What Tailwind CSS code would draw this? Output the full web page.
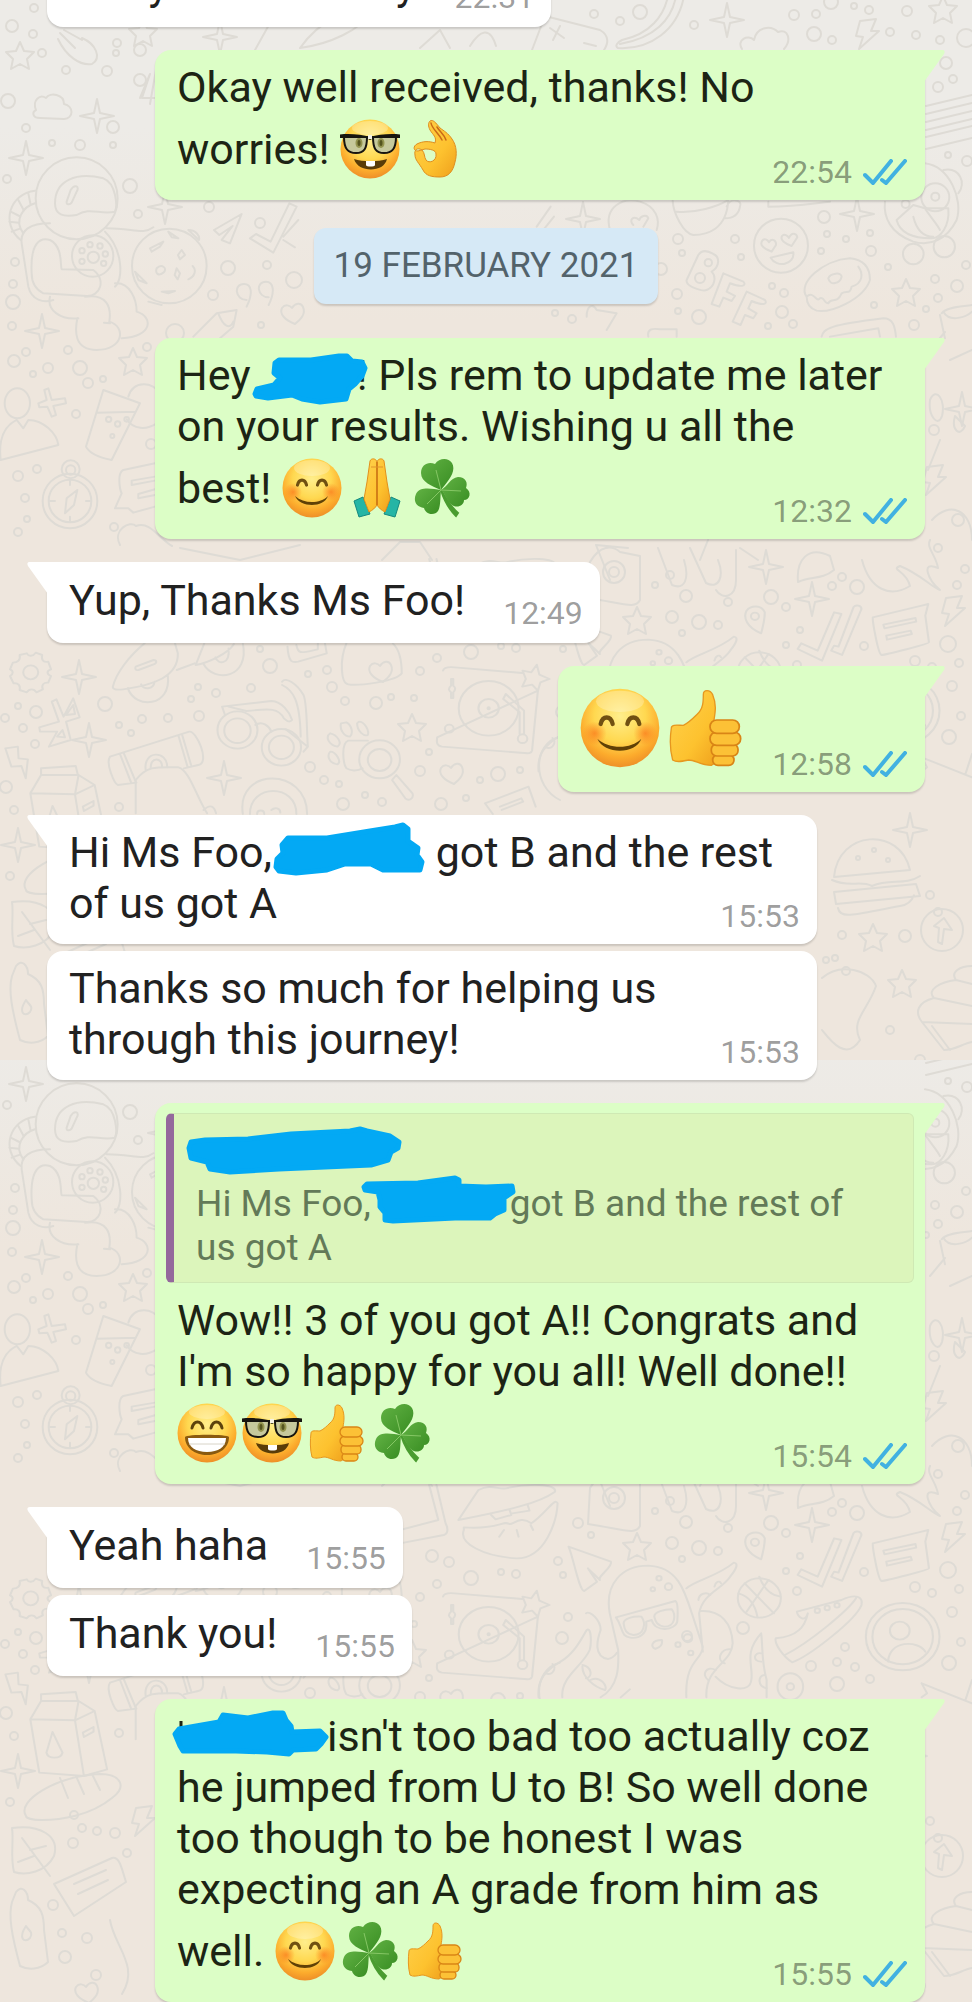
<!DOCTYPE html>
<html lang="en">
<head>
    <meta charset="UTF-8">
    <meta name="viewport" content="width=device-width, initial-scale=1.0">
    <title>Chat</title>
    <script src="https://cdn.jsdelivr.net/npm/@tailwindcss/browser@4"></script>
</head>
<body class="bg-[#eee6dd] font-[Roboto,'Liberation_Sans',sans-serif] text-[#1c2414]">

    <!-- Shared drawings -->
    <svg class="absolute w-0 h-0" aria-hidden="true">
        <defs>
            <radialGradient id="face" cx="0.5" cy="0.35" r="0.65">
                <stop offset="0" stop-color="#ffee8c"/>
                <stop offset="0.5" stop-color="#ffd850"/>
                <stop offset="0.8" stop-color="#fcab2c"/>
                <stop offset="1" stop-color="#ee8f28"/>
            </radialGradient>
            <radialGradient id="blush">
                <stop offset="0" stop-color="#fb7a1c" stop-opacity="0.75"/>
                <stop offset="1" stop-color="#fb7a1c" stop-opacity="0"/>
            </radialGradient>
            <linearGradient id="skin" x1="0" y1="0" x2="1" y2="1">
                <stop offset="0" stop-color="#ffd24d"/>
                <stop offset="0.6" stop-color="#fdc22f"/>
                <stop offset="1" stop-color="#ef9f1c"/>
            </linearGradient>
            <linearGradient id="leaf" x1="0" y1="0" x2="1" y2="1">
                <stop offset="0" stop-color="#62b244"/>
                <stop offset="1" stop-color="#388d22"/>
            </linearGradient>

            <symbol id="smile" viewBox="0 0 60 60">
                <circle cx="30" cy="30" r="29.500" fill="url(#face)"/>
                <ellipse cx="30" cy="10" rx="18" ry="8" fill="#fff" opacity="0.25"/>
                <circle cx="11" cy="34" r="9" fill="url(#blush)"/>
                <circle cx="49" cy="34" r="9" fill="url(#blush)"/>
                <path d="M15.500 27C17 20.500 23 20.500 24.500 27M35.500 27C37 20.500 43 20.500 44.500 27" fill="none" stroke="#705012" stroke-width="3.200" stroke-linecap="round"/>
                <path d="M13 38C22 46 38 46 46 38C42 50 18 50 13 38Z" fill="#604106"/>
            </symbol>

            <symbol id="grin" viewBox="0 0 60 60">
                <circle cx="30" cy="30" r="29.500" fill="url(#face)"/>
                <ellipse cx="30" cy="9" rx="18" ry="7" fill="#fff" opacity="0.25"/>
                <path d="M15 25C17 17 24 17 26 25M34 25C36 17 43 17 45 25" fill="none" stroke="#5d430c" stroke-width="3" stroke-linecap="round"/>
                <path d="M8 34C9 31 51 31 52 34C52 45 42 52 30 52C18 52 8 45 8 34Z" fill="#8a5a10"/>
                <path d="M11 35H49C49 44 41 49 30 49C19 49 11 44 11 35Z" fill="#fff"/>
                <path d="M12 41H48" stroke="#d8d4c8" stroke-width="1"/>
            </symbol>

            <symbol id="nerd" viewBox="0 0 60 60">
                <circle cx="30" cy="30" r="29.500" fill="url(#face)"/>
                <ellipse cx="30" cy="9" rx="18" ry="7" fill="#fff" opacity="0.25"/>
                <path d="M4 18H27C27 30 24 34 16 34C8 34 4 30 4 18ZM33 18H56C56 30 52 34 44 34C36 34 33 30 33 18Z" fill="#c6c99c" stroke="#17150f" stroke-width="2"/>
                <path d="M0 15.500C10 14.500 22 15.500 30 18C38 15.500 50 14.500 60 15.500V19L56 19H34L30 21L26 19H4L0 19Z" fill="#17150f"/>
                <ellipse cx="19" cy="24" rx="3.500" ry="5" fill="#93944f"/>
                <ellipse cx="41" cy="24" rx="3.500" ry="5" fill="#93944f"/>
                <ellipse cx="19" cy="24" rx="1.500" ry="3" fill="#55551f"/>
                <ellipse cx="41" cy="24" rx="1.500" ry="3" fill="#55551f"/>
                <rect x="28" y="16" width="4" height="4" fill="#f5f2e6"/>
                <path d="M14 40C23 43 38 43 47 40C44 54 18 54 14 40Z" fill="#5a3c08"/>
                <path d="M26 42H35V46C35 48 26 48 26 46Z" fill="#fff"/>
            </symbol>

            <symbol id="okay" viewBox="0 0 60 60">
                <path fill-rule="evenodd" d="M25 2C28 0 31 4 35 9C39 12 43 14 47 20C52 27 52 36 50 43C48 53 43 58 35 58C27 58 21 57 18 51C14 44 10 41 10 36C9 31 12 28 17 31C20 34 19 38 21 41C24 45 32 42 31 35C31 31 25 30 20 30L13 32C8 32 8 27 12 25C18 22 24 22 30 24C32 18 28 16 25 11C23 7 23 4 25 2Z" fill="url(#skin)" stroke="#de8d20" stroke-width="1"/>
                <path d="M26 4C27 10 33 13 37 21M32 8C35 13 39 15 41 21" fill="none" stroke="#c96a17" stroke-width="1.500" stroke-linecap="round"/>
            </symbol>

            <symbol id="thumb" viewBox="0 0 60 60">
                <path d="M4 30C4 27 9 28 13 28C17 26 20 23 23 20C28 16 28 10 28 5C28 1 33 1 35 5C38 12 37 18 36 24L40 30V54L34 58C26 58 22 54 17 54C12 55 8 56 5 54C3 47 3 37 4 30Z" fill="url(#skin)" stroke="#e6971f" stroke-width="1"/>
                <g fill="#fcc136" stroke="#d98516" stroke-width="1.300">
                    <rect x="35" y="50" width="16" height="8" rx="4"/>
                    <rect x="34" y="42" width="20" height="9" rx="4"/>
                    <rect x="33" y="33" width="23" height="10" rx="5"/>
                    <rect x="33" y="24" width="22" height="10" rx="5"/>
                </g>
            </symbol>

            <symbol id="pray" viewBox="0 0 60 60">
                <path d="M7 43L16 39L23 56L12 59ZM53 43L44 39L37 56L48 59Z" fill="#25b5a5" stroke="#15887f" stroke-width="1"/>
                <path d="M30 4C29 0 24 0 23 3L20 24L17 41L22 54C26 52 28 50 30 47C32 50 34 52 38 54L43 41L40 24L37 3C36 0 31 0 30 4Z" fill="url(#skin)" stroke="#e2901d" stroke-width="1"/>
                <path d="M30 4V47" stroke="#c96f12" stroke-width="1.600"/>
                <path d="M24 9H36" stroke="#e0932a" stroke-width="1"/>
            </symbol>

            <symbol id="clover" viewBox="0 0 60 60">
                <path d="M29 32C32 42 38 52 44 58L46 55C39 49 34 41 29 32Z" fill="#4a9c30" stroke="#4a9c30" stroke-width="2"/>
                <path d="M29 32C20 28 9 24 9 15C9 6 17 3 23 6C27 0 36 -1 40 5C45 14 35 24 29 32Z" fill="url(#leaf)"/>
                <path d="M29 32C28 42 29 52 24 55C18 58 13 54 12 50C4 49 1 43 4 36C8 28 20 31 29 32Z" fill="url(#leaf)"/>
                <path d="M29 32C36 28 38 20 46 19C54 19 56 25 54 30C60 34 58 42 52 42C52 48 44 51 39 46C34 42 33 35 29 32Z" fill="url(#leaf)"/>
                <path d="M29 32L24 12M29 32L15 46M29 32L49 33" stroke="#86c765" stroke-width="1" fill="none"/>
            </symbol>

            <symbol id="ticks" viewBox="0 0 44 26">
                <path d="M2 16L10 24L28 2M19 21L23 24L42 2" fill="none" stroke="#41b1e1" stroke-width="4" stroke-linecap="round"/>
            </symbol>
            <symbol id="tail" viewBox="0 0 21 32">
                <path d="M0 0H18C21 0 21 2 20 4L0 32Z" fill="currentColor"/>
            </symbol>

            <!-- Wallpaper pieces -->
            <path id="sparkle" d="M0 -17L3 -3L17 0L3 3L0 17L-3 3L-17 0L-3 -3Z"/>
            <path id="star" d="M0 -14L4 -5L14 -4L7 3L9 13L0 8L-9 13L-7 3L-14 -4L-4 -5Z"/>
            <path id="bolt" d="M-7 -13L9 -15L4 -3L12 -3L-8 15L-4 3L-11 2Z"/>
            <path id="heart" d="M2 11C-8 7 -14 1 -11 -5C-8 -9 -3 -8 -1 -5C2 -10 8 -11 10 -6C13 1 8 6 2 11Z"/>

            <g id="doodles" fill="none" stroke="#dedbd5" stroke-width="2" stroke-linejoin="round" stroke-linecap="round">
                <g id="dots"></g>
                <use href="#sparkle" x="26" y="158"/>
                <use href="#sparkle" x="42" y="331"/>
                <use href="#sparkle" x="97" y="116"/>
                <use href="#sparkle" x="165" y="207"/>
                <use href="#sparkle" x="220" y="37"/>
                <use href="#sparkle" x="727" y="20"/>
                <use href="#sparkle" x="583" y="219"/>
                <use href="#sparkle" x="857" y="214"/>
                <use href="#sparkle" x="79" y="677"/>
                <use href="#sparkle" x="89" y="740"/>
                <use href="#sparkle" x="224" y="778"/>
                <use href="#sparkle" x="766" y="567"/>
                <use href="#sparkle" x="812" y="599"/>
                <use href="#sparkle" x="962" y="409"/>
                <use href="#sparkle" x="18" y="845"/>
                <use href="#sparkle" x="910" y="830"/>
                <use href="#star" x="20" y="56"/>
                <use href="#star" x="143" y="33"/>
                <use href="#star" x="943" y="10"/>
                <use href="#star" x="906" y="293"/>
                <use href="#star" x="133" y="362"/>
                <use href="#star" x="412" y="728"/>
                <use href="#star" x="637" y="621"/>
                <use href="#star" x="873" y="938"/>
                <use href="#star" x="902" y="984"/>
                <use href="#bolt" x="867" y="34"/>
                <use href="#bolt" x="953" y="611"/>
                <use href="#bolt" x="934" y="480"/>
                <use href="#bolt" x="143" y="895"/>
                <use href="#heart" x="293" y="313"/>
                <use href="#heart" x="452" y="773"/>
                <use href="#heart" x="87" y="1066"/>
                <use href="#heart" x="381" y="671"/>

                <!-- Cloud, hand and cookies along the top edge -->
                <path d="M36 110C32 100 40 94 46 98C50 92 64 94 64 104C74 106 74 118 64 119L40 118C32 118 32 112 36 110Z"/>
                <path d="M60 33L75 48M64 30L82 40M58 39C66 56 80 66 92 64C102 58 96 44 82 38M150 74L142 98H156M156 70L150 104M140 98L150 74"/>
                <path d="M255 50L275 14M300 48C320 20 350 6 372 12M300 48C330 44 360 30 372 12M420 48L440 30L450 48M470 46C480 30 490 26 496 46"/>
                <path d="M532 50L545 16L600 30C610 36 608 44 604 50M550 28L564 38M560 26L553 40M584 43L596 46"/>
                <path d="M684 -4C678 30 650 50 618 48C614 46 618 42 622 40C650 34 664 16 668 -4M676 -4C672 20 654 38 620 44"/>
                <path d="M742 49C736 40 748 34 754 40C756 28 770 24 778 32C788 28 792 40 784 49"/>
                <path d="M926 106L972 95M926 114L972 103M926 122L972 111M926 130L972 119M926 137L972 126M926 149L972 138"/>

                <!-- Astronaut and moon -->
                <g transform="translate(0 140) scale(.3333)" stroke-width="6">
                    <circle cx="230" cy="175" r="123"/>
                    <path d="M165 190C165 120 230 95 310 115C350 130 352 200 345 215C300 225 270 200 230 225C190 232 165 225 165 190ZM200 185L212 150C225 130 240 140 230 155L215 188C210 195 198 195 200 185Z"/>
                    <path d="M105 152C30 160 0 250 62 300M105 190C70 200 40 240 70 280M85 160L92 195M55 180L72 212M32 215L58 228M28 245L56 248M35 275L62 265"/>
                    <path d="M150 250C90 250 60 270 65 310L85 440C95 480 130 490 160 480M95 400C90 310 120 290 150 300C190 320 180 380 185 388L280 390C320 420 300 470 260 468L130 460C110 450 95 430 95 400"/>
                    <circle cx="278" cy="348" r="62"/><circle cx="280" cy="352" r="17"/><circle cx="246" cy="332" r="8"/><circle cx="270" cy="314" r="8"/><circle cx="300" cy="318" r="8"/><circle cx="316" cy="342" r="8"/><circle cx="311" cy="370" r="8"/><circle cx="246" cy="364" r="8"/>
                    <path d="M320 265C400 265 430 285 460 262M315 275C370 330 370 420 345 440M345 430C390 425 410 480 410 515C460 530 460 590 365 595M150 470C140 510 180 540 235 535M255 470C320 460 335 500 328 545C380 560 370 630 290 630C220 630 225 570 232 535M312 548L330 550"/>
                    <circle cx="508" cy="378" r="112"/>
                    <path d="M450 325L490 305L480 320L455 335ZM505 275L535 295L515 292ZM565 270C590 270 600 290 597 300ZM405 395L440 430L415 420ZM545 330L555 345L540 358L534 345ZM470 385C485 370 505 385 490 398C475 410 465 400 470 385ZM530 385L540 400L533 418L524 405ZM565 418C585 410 590 390 578 378M485 455L525 453L505 460ZM445 485L485 495"/>
                    <path d="M725 222L690 310L665 300L698 258L658 285L642 270ZM750 295L768 282L812 305L868 190L890 200L820 338ZM850 290L895 240M885 322L850 300"/>
                    <path d="M740 500C760 460 755 432 732 432C700 432 705 480 740 480M806 495C826 455 821 425 798 425C766 425 771 472 806 472M580 590L650 520L710 510L700 560L660 595M655 520C670 560 690 570 700 545"/>
                    <ellipse cx="52" cy="790" rx="38" ry="45"/>
                    <path d="M2 960C-5 900 10 860 50 840L70 865L85 840C130 840 170 880 175 915ZM145 745L155 780L195 775L198 790L160 798L168 825L155 830L142 800L118 802L115 790L140 780L133 750Z"/>
                    <path d="M310 750L420 790L335 960C310 955 270 945 258 920ZM290 818L408 815M385 770C400 720 460 725 480 760M380 838C400 870 440 870 470 850"/>
                    <circle cx="326" cy="838" r="8"/><circle cx="353" cy="852" r="8"/><circle cx="380" cy="838" r="7"/><circle cx="337" cy="888" r="6"/>
                    <circle cx="210" cy="1083" r="82"/><circle cx="210" cy="1083" r="64"/><circle cx="212" cy="988" r="27"/><circle cx="212" cy="990" r="14"/>
                    <path d="M232 1050L222 1095L195 1120L200 1075ZM210 1022V1035M210 1130V1145M150 1083H165M258 1083H270"/>
                    <path d="M465 970L370 990C350 1000 360 1050 365 1060L345 1105L385 1105L400 1118L465 1100M465 1010L395 1022V1035L465 1022M465 1048L415 1062V1075L465 1065"/>
                </g>

                <!-- Cup, faces, donut and owl on the upper right -->
                <g transform="translate(530) scale(.3333)" stroke-width="6">
                    <path d="M428 602C430 640 460 700 490 705C530 705 590 690 595 600M440 635C500 640 560 620 592 602M590 620C600 590 640 600 630 620C625 650 600 655 585 655M240 690C220 620 280 590 330 605C380 620 390 660 380 690M340 680L355 655C350 640 330 650 328 660C310 645 295 660 310 675M20 680L62 620M40 690L72 650"/>
                    <circle cx="753" cy="737" r="81"/>
                    <path d="M725 755C700 745 688 735 697 722C705 712 715 722 717 727C725 712 740 722 738 735ZM785 738C765 730 748 720 757 707C765 700 775 710 777 714C785 695 800 700 802 712ZM722 773L790 757C795 795 740 805 722 773Z"/>
                    <path d="M505 765L470 840C465 860 520 875 530 870C555 860 560 830 545 815C570 800 570 770 550 762C530 750 515 750 505 765ZM580 820L640 845C650 855 640 865 600 850L590 875L615 888L605 903L580 893L568 920L545 912ZM650 875L705 900C712 910 705 920 665 903L655 925L680 940L670 955L645 945L632 975L608 965Z"/>
                    <circle cx="535" cy="788" r="11"/><circle cx="510" cy="834" r="15"/>
                    <path d="M830 890C800 850 880 780 960 775C1010 780 1020 810 1020 840C1000 900 900 940 860 932C840 925 830 910 830 890ZM830 890C850 870 860 910 870 895C885 890 880 910 895 910C905 890 920 915 935 880C950 870 960 885 965 860C1000 850 1000 820 985 800M895 835C900 820 935 815 935 830C930 850 900 860 895 835Z"/>
                    <path d="M1185 490C1260 500 1300 600 1280 660C1250 720 1200 740 1150 725C1080 700 1060 650 1065 605M1100 660L1150 615L1185 625L1255 625C1260 680 1230 715 1205 715C1150 715 1110 700 1100 660M1150 650C1160 690 1180 710 1210 710M1185 625C1200 650 1220 670 1230 690M1240 510C1290 500 1310 550 1285 580"/>
                    <circle cx="1216" cy="592" r="42"/><circle cx="1216" cy="590" r="12"/><circle cx="1127" cy="612" r="12"/>
                    <circle cx="1150" cy="762" r="31"/><circle cx="1243" cy="740" r="32"/>
                    <path d="M715 605V620C800 620 850 610 900 605M170 950C170 915 190 910 200 930L260 940L230 990M355 1010C350 985 370 985 390 988H440V1010M875 1010C880 985 900 975 1060 955C1090 955 1095 980 1098 1010M900 1010L1045 985L1050 1010M1230 945L1245 1015M1240 935C1260 970 1310 950 1326 935M1235 940C1250 920 1300 920 1326 915"/>
                </g>

                <!-- Drinks and shapes beside the second and third rows -->
                <path d="M930 400C936 386 946 400 942 416C938 428 928 416 930 400ZM955 416C951 430 960 438 965 426ZM950 360L972 350M928 470L940 440M932 520C950 500 972 510 972 540M930 350L945 332"/>
                <path d="M120 545C112 530 130 520 136 526C150 520 160 540 172 546M180 548L240 560L300 545M382 560L400 542H420L432 560M610 580L596 545L628 548M700 560L708 540M740 548L758 560"/>
                <path d="M590 562C600 545 612 545 620 552L640 556V600C636 608 628 605 600 600L588 598Z"/><circle cx="614" cy="572" r="11"/><circle cx="614" cy="572" r="5"/>
                <path d="M658 548L672 585C684 590 690 580 684 560M690 548L706 583C720 590 724 575 718 560M716 590C722 600 736 598 736 580V550M798 582C796 560 808 545 830 556L834 570C822 580 810 576 798 582ZM862 560C870 590 890 598 910 586C906 570 890 570 900 566C920 574 930 586 940 590C928 580 920 560 938 568C936 555 926 548 930 540"/>

                <!-- Octopus, turntable, trainer and friends -->
                <g transform="translate(400 554) scale(.3648 .3333)" stroke-width="5.700">
                    <path d="M160 120L215 30C250 10 270 30 290 25C350 10 430 10 425 35C380 70 300 90 160 120ZM250 105L262 118L305 105L300 88M308 100L355 92L350 75M175 150C160 190 230 230 320 235C400 235 430 120 432 70C425 50 400 100 360 130C330 105 310 135 300 132C280 120 270 150 175 142ZM272 170L285 150M325 170L320 150M365 150L358 135"/>
                    <path d="M0 190L120 165C135 160 130 140 125 130L100 15M0 150L105 120L80 15"/>
                    <path d="M462 200L578 245C585 260 540 290 548 300L515 265L540 305L505 333C490 330 475 230 462 200Z"/>
                    <path d="M118 350C120 340 130 338 150 340L335 357M378 410L362 590C360 600 350 598 340 597L115 578C100 575 100 565 102 550Z"/>
                    <circle cx="243" cy="463" r="82"/><circle cx="243" cy="463" r="28"/><circle cx="243" cy="463" r="3"/><circle cx="336" cy="554" r="13"/><circle cx="135" cy="524" r="12"/>
                    <path d="M340 540V470L290 420L283 435L328 475V540M375 332L382 362L410 375L385 385L378 410L362 392L335 398L345 375L336 350L360 355ZM140 375V395C130 405 135 410 140 415V432H146V415C155 405 150 398 146 395V375Z"/>
                    <path d="M380 652C375 600 400 570 440 545C480 520 500 470 512 450C525 440 525 490 520 510C500 560 440 590 445 652M510 400C520 390 550 420 550 450C540 480 530 530 570 537C585 535 590 525 595 518M550 652C600 620 600 560 598 510L575 400C560 310 610 257 680 257C760 260 780 330 800 400L830 500C830 540 780 540 785 652M785 325C810 300 870 290 915 248C930 250 920 270 905 290C880 330 830 340 820 400L830 515M825 393C880 390 910 430 912 490C910 550 835 560 840 652M865 590C900 630 960 640 963 600C970 560 940 520 990 460C995 500 990 540 1005 600V652M500 560C500 590 530 620 562 630M605 652L630 628"/>
                    <path d="M592 412L755 363C765 370 760 420 760 425C755 450 700 460 690 420L675 425C680 480 630 480 615 465C605 450 605 430 592 412ZM613 430C613 415 640 408 662 410C675 430 670 465 640 465C620 462 615 450 613 430ZM697 410C697 395 725 388 745 388C757 405 755 440 725 440C705 437 700 425 697 410Z"/>
                    <circle cx="710" cy="295" r="7"/><circle cx="736" cy="320" r="10"/><circle cx="693" cy="328" r="6"/><circle cx="789" cy="475" r="12"/><circle cx="762" cy="494" r="7"/><circle cx="797" cy="519" r="7"/>
                    <path d="M718 480C690 480 685 500 700 507C715 500 720 495 718 480ZM818 360C820 340 840 335 850 345M862 320C865 305 875 300 880 310M500 555C525 560 530 590 510 595M522 600C550 585 570 620 562 630M400 580C420 590 430 560 418 552M905 508C880 505 865 540 890 550M865 570C840 555 825 585 845 600M990 520C970 515 965 545 990 545M1000 585C980 585 980 620 1005 625"/>
                    <circle cx="985" cy="354" r="59"/>
                    <path d="M945 310L1025 400M1010 300L950 395M928 340C960 350 975 380 980 412M985 290C995 320 1010 345 1043 350"/>
                    <path d="M990 238C950 220 940 190 950 170C960 155 990 150 1000 175C1000 200 995 215 990 238Z"/><circle cx="973" cy="187" r="11"/>
                    <path d="M1090 285L1100 268L1145 290L1190 175L1210 180L1157 320ZM1182 290L1190 275L1202 278L1243 160C1250 150 1265 155 1265 165L1212 303Z"/>
                    <path d="M1088 395L1210 360C1250 340 1270 350 1265 375C1250 420 1120 530 1075 547C1050 530 1025 490 1030 475C1090 470 1110 440 1118 400C1110 430 1090 410 1088 395ZM1055 525C1120 490 1230 390 1250 355"/>
                    <circle cx="1144" cy="392" r="7"/><circle cx="1171" cy="384" r="7"/><circle cx="1198" cy="376" r="7"/>
                    <path d="M1296 190L1430 155L1448 150L1440 185L1450 265C1450 270 1330 303 1320 303C1310 300 1295 200 1296 190ZM1325 212L1413 192L1415 203L1328 223ZM1333 245L1400 230L1403 240L1335 257Z"/>
                    <circle cx="1378" cy="470" r="101"/><circle cx="1378" cy="470" r="83"/><circle cx="1370" cy="452" r="27"/>
                    <path d="M1338 545C1340 480 1420 480 1440 515"/>
                    <ellipse cx="1070" cy="620" rx="35" ry="40"/><circle cx="1070" cy="620" r="10"/>
                    <path d="M1430 610L1568 670M1430 610L1445 640L1430 652M1568 600L1550 660"/>
                </g>

                <!-- Gear, skateboard, glasses, magnifier -->
                <g transform="translate(0 640) scale(.3571 .3333)" stroke-width="5.700">
                    <path d="M75 40C80 50 92 50 100 38L118 45C115 60 122 68 135 65L143 88C130 92 130 102 143 108L135 128C122 127 115 135 120 148L102 157C95 145 82 145 75 157L55 150C58 135 50 128 38 130L28 108C38 102 38 92 28 88L36 68C50 68 58 60 55 45Z"/>
                    <circle cx="86" cy="97" r="21"/>
                    <path d="M145 185L158 178L178 230L205 175L223 232L185 245L198 300L137 320L160 275L112 275L110 262L165 245ZM185 225L205 195L210 222ZM160 290L175 270L182 292Z"/>
                    <path d="M405 10C360 50 325 100 316 140C315 150 330 150 345 148C430 135 500 110 498 40L490 10M380 80L430 60C440 60 440 70 430 73L388 90C378 92 378 84 380 80ZM358 145C380 210 480 200 470 108M395 133C400 150 430 150 433 125M495 90L545 70M572 10L548 75C580 70 640 40 655 12M570 72C600 130 700 115 680 10M603 52C610 75 645 75 640 25"/>
                    <path d="M308 350L530 275C550 270 590 370 555 375L515 385M308 350C295 370 320 430 330 435L382 428M336 342L368 430M346 338L380 425M500 288L525 380M510 284L535 375M408 390C400 330 470 330 468 382M422 385C420 350 455 350 454 382"/>
                    <path d="M380 520V420C410 380 430 380 500 382C530 390 550 470 580 520M570 510C590 490 600 500 605 520"/>
                    <circle cx="665" cy="270" r="56"/><circle cx="665" cy="272" r="37"/><circle cx="788" cy="322" r="55"/><circle cx="788" cy="322" r="35"/>
                    <path d="M622 200L760 183C790 185 810 215 818 240C810 250 800 240 795 235C780 205 760 205 690 213L640 200M622 200L630 225M715 255C735 240 755 260 760 275M790 125C800 110 830 130 850 165C860 190 858 250 862 320L850 335M790 135C820 150 840 180 842 290M862 320L800 268"/>
                    <path d="M970 10C950 60 955 130 975 133C1000 138 1110 125 1125 100C1125 60 1120 30 1100 10M805 20C808 70 820 68 835 65L915 40L910 10M830 15C835 45 845 38 890 28V10"/>
                    <circle cx="1063" cy="358" r="57"/><circle cx="1063" cy="360" r="33"/>
                    <path d="M1098 420L1110 405L1155 460C1160 475 1145 485 1135 475ZM1030 302H975C955 310 960 370 970 385C980 392 1000 395 1015 385M925 280C910 290 920 315 945 320C960 310 945 285 925 280ZM955 250C950 270 965 290 980 290C990 280 985 255 970 247ZM1000 250C1000 275 1020 290 1030 285C1035 270 1020 245 1005 245ZM925 335C915 345 920 370 945 373C958 365 940 335 925 335Z"/>
                    <path d="M15 325L50 320L52 355L78 358L72 415L60 378L32 380Z"/>
                    <path d="M115 405V385L212 378L218 405ZM115 405L85 460L95 525L110 620L235 630M85 460L210 463L220 405L265 435L300 610L235 630L210 463L265 435M232 500L262 483V497L235 513ZM130 560L147 498L175 560C170 580 135 580 130 560Z"/>
                    <path d="M680 522C660 380 860 380 860 522M700 522C700 430 830 430 830 522M720 522C720 508 740 508 740 522M760 510C770 500 785 505 785 518"/>
                    <path d="M1380 522L1358 490L1480 440L1500 500M1400 500L1460 475L1465 485L1405 510M1568 290C1490 310 1490 440 1568 480"/>
                </g>

                <!-- Burger, cupcake, leaf, bottle -->
                <path d="M834 877C838 830 900 826 910 870ZM832 880C850 888 860 880 872 886C890 878 905 886 920 876M834 892L916 884L920 896L836 904ZM838 908C840 920 856 914 900 906C914 904 914 892 914 896"/>
                <circle cx="858" cy="858" r="2"/><circle cx="874" cy="850" r="2"/><circle cx="888" cy="860" r="2"/>
                <circle cx="942" cy="930" r="21"/><path d="M934 926L944 918L952 930L944 929L942 944L938 942L939 928Z"/>
                <path d="M972 966C960 966 950 972 956 980C940 982 926 990 934 998C918 1002 914 1012 922 1022L944 1050C955 1050 962 1044 972 1042M932 1026L950 1050M956 980L972 984M934 998L972 1006M922 1022L972 1024"/>
                <path d="M822 978C840 962 870 970 876 986C868 1010 850 1020 860 1040C846 1062 830 1040 822 1030"/>
                <path d="M26 890C16 875 56 850 100 848C120 848 128 860 112 872C90 890 60 894 42 894C32 894 26 892 26 890ZM60 852L68 872M76 850L84 868M92 848L100 864"/>
                <path d="M12 902C40 898 60 910 54 930C46 946 26 950 14 946C10 930 14 916 12 902ZM22 912L50 950M30 924L46 920M34 930L18 936"/>
                <path d="M54 958L112 932C120 930 122 944 126 956L74 990L64 974L54 958ZM74 958L106 944M78 968L108 954"/>
                <path d="M16 966C22 958 28 966 28 974C42 980 44 990 44 1004L48 1036C40 1044 28 1044 20 1040C12 1010 8 990 12 976ZM26 1000C18 1012 24 1018 30 1012C34 1006 28 1004 26 1000ZM110 994C114 1020 140 1040 122 1068"/>
            </g>

            <linearGradient id="haze" x1="0" y1="0" x2="0" y2="320" gradientUnits="userSpaceOnUse">
                <stop offset="0.400" stop-color="#edebe7"/>
                <stop offset="1" stop-color="#eee6dd"/>
            </linearGradient>
        </defs>
    </svg>

    <main class="relative overflow-hidden">
        <!-- Wallpaper -->
        <svg class="absolute top-0 left-0 w-full h-[1060px]" viewBox="0 0 972 1060" preserveAspectRatio="xMidYMin slice" aria-hidden="true">
            <rect width="972" height="1060" fill="url(#haze)"/>
            <use href="#doodles"/>
        </svg>
        <svg class="absolute top-[1060px] left-0 w-full h-[942px]" viewBox="0 134 972 942" preserveAspectRatio="xMidYMin slice" aria-hidden="true">
            <rect y="134" width="972" height="942" fill="url(#haze)"/>
            <use href="#doodles"/>
        </svg>

        <div class="relative flex flex-col items-start px-[47px] -mt-[54px] text-[43px] leading-[51px]">

            <div class="flex items-end gap-[38px] rounded-2xl bg-white pt-[13px] pb-[17px] pl-[22px] pr-[17px] text-[#212121] shadow-[0_2px_2px_rgba(0,0,0,0.15)]">
                <p>Sorry for the delay</p>
                <time class="text-[32px] leading-8 -mb-[3px] text-black/40">22:31</time>
            </div>

            <div class="relative grid self-stretch ml-[108px] mt-[23px] rounded-2xl rounded-tr-none bg-[#dcfec6] shadow-[0_2px_2px_rgba(0,0,0,0.15)]">
                <svg class="absolute -right-5 top-0 w-[21px] h-8 text-[#dcfec6]"><use href="#tail"/></svg>
                <p class="[grid-area:1/1] pt-3 pb-[15px] pl-[22px] pr-8">Okay well received, thanks! No worries! <svg class="inline-block w-[60px] h-[60px] mr-[5px] my-[6px] align-[-21px]" role="img" aria-label="🤓"><use href="#nerd"/></svg><svg class="inline-block w-[60px] h-[60px] mr-[5px] my-[6px] align-[-21px]" role="img" aria-label="👌"><use href="#okay"/></svg></p>
                <div class="[grid-area:1/1] self-end justify-self-end flex items-center gap-[11px] pr-[18px] pb-3 text-[32px] leading-8 text-black/40">
                    <time>22:54</time>
                    <svg class="w-11 h-[26px]" role="img" aria-label="Read"><use href="#ticks"/></svg>
                </div>
            </div>

            <h2 class="self-center mt-7 mb-[11px] rounded-xl bg-[#d6e9f6] px-5 py-3 text-[35px] leading-[52px] text-[#53636b] shadow-[0_2px_2px_rgba(0,0,0,0.15)]">19 FEBRUARY 2021</h2>

            <div class="relative grid self-stretch ml-[108px] mt-[23px] rounded-2xl rounded-tr-none bg-[#dcfec6] shadow-[0_2px_2px_rgba(0,0,0,0.15)]">
                <svg class="absolute -right-5 top-0 w-[21px] h-8 text-[#dcfec6]"><use href="#tail"/></svg>
                <p class="[grid-area:1/1] pt-3 pb-[15px] pl-[22px] pr-8">Hey .<span class="relative inline-block w-[84px] h-[30px]"><svg class="absolute inset-0 w-full h-full overflow-visible" viewBox="272 39 84 30" aria-hidden="true"><path d="M254 73L256 68L273 64L279 57L273 52L274 42L278 39L310 39L338 35L346 35L351 40L361 41L364 47L361 55L354 63L348 68L345 78L319 81L301 78L291 74L267 77L255 75Z" fill="#03a9f4" stroke="#03a9f4" stroke-width="5" stroke-linejoin="round"/></svg></span>! Pls rem to update me later on your results. Wishing u all the best! <svg class="inline-block w-[60px] h-[60px] mr-[5px] my-[6px] align-[-21px]" role="img" aria-label="😊"><use href="#smile"/></svg><svg class="inline-block w-[60px] h-[60px] mr-[5px] my-[6px] align-[-21px]" role="img" aria-label="🙏"><use href="#pray"/></svg><svg class="inline-block w-[60px] h-[60px] mr-[5px] my-[6px] align-[-21px]" role="img" aria-label="☘"><use href="#clover"/></svg></p>
                <div class="[grid-area:1/1] self-end justify-self-end flex items-center gap-[11px] pr-[18px] pb-3 text-[32px] leading-8 text-black/40">
                    <time>12:32</time>
                    <svg class="w-11 h-[26px]" role="img" aria-label="Read"><use href="#ticks"/></svg>
                </div>
            </div>

            <div class="relative flex items-end gap-[38px] mt-[23px] rounded-2xl rounded-tl-none bg-white pt-[13px] pb-[17px] pl-[22px] pr-[17px] text-[#212121] shadow-[0_2px_2px_rgba(0,0,0,0.15)]">
                <svg class="absolute -left-5 top-0 w-[21px] h-8 -scale-x-100 text-white"><use href="#tail"/></svg>
                <p>Yup, Thanks Ms Foo!</p>
                <time class="text-[32px] leading-8 -mb-[3px] text-black/40">12:49</time>
            </div>

            <div class="relative flex items-end self-end mt-[23px] rounded-2xl rounded-tr-none bg-[#dcfec6] pl-[22px] pr-[18px] shadow-[0_2px_2px_rgba(0,0,0,0.15)]">
                <svg class="absolute -right-5 top-0 w-[21px] h-8 text-[#dcfec6]"><use href="#tail"/></svg>
                <p class="flex gap-[6px] pt-[22px] pb-6 mr-[26px]"><svg class="w-20 h-20" role="img" aria-label="😊"><use href="#smile"/></svg><svg class="w-20 h-20" role="img" aria-label="👍"><use href="#thumb"/></svg></p>
                <div class="flex items-center gap-[11px] pb-3 text-[32px] leading-8 text-black/40">
                    <time>12:58</time>
                    <svg class="w-11 h-[26px]" role="img" aria-label="Read"><use href="#ticks"/></svg>
                </div>
            </div>

            <div class="relative grid self-stretch mr-[108px] mt-[23px] rounded-2xl rounded-tl-none bg-white text-[#212121] shadow-[0_2px_2px_rgba(0,0,0,0.15)]">
                <svg class="absolute -left-5 top-0 w-[21px] h-8 -scale-x-100 text-white"><use href="#tail"/></svg>
                <p class="[grid-area:1/1] pt-3 pb-[15px] pl-[22px] pr-8">Hi Ms Foo,<span class="relative inline-block w-[153px] h-[30px]"><svg class="absolute inset-0 w-full h-full overflow-visible" viewBox="274 197 153 30" aria-hidden="true"><path d="M278 227L279 219L285 213L284 205L290 198L329 198L372 191L397 187L405 185L410 189L410 201L420 208L419 215L424 222L422 230L385 230L373 224L347 224L329 230L298 233L281 231Z" fill="#03a9f4" stroke="#03a9f4" stroke-width="5" stroke-linejoin="round"/></svg></span> got B and the rest of us got A</p>
                <time class="[grid-area:1/1] self-end justify-self-end pr-[17px] pb-3 text-[32px] leading-8 text-black/40">15:53</time>
            </div>

            <div class="grid self-stretch mr-[108px] mt-[7px] rounded-2xl bg-white text-[#212121] shadow-[0_2px_2px_rgba(0,0,0,0.15)]">
                <p class="[grid-area:1/1] pt-3 pb-[15px] pl-[22px] pr-8">Thanks so much for helping us through this journey!</p>
                <time class="[grid-area:1/1] self-end justify-self-end pr-[17px] pb-3 text-[32px] leading-8 text-black/40">15:53</time>
            </div>

            <div class="relative grid self-stretch ml-[108px] mt-[23px] rounded-2xl rounded-tr-none bg-[#dcfec6] shadow-[0_2px_2px_rgba(0,0,0,0.15)]">
                <svg class="absolute -right-5 top-0 w-[21px] h-8 text-[#dcfec6]"><use href="#tail"/></svg>
                <blockquote class="mx-[11px] mt-[10px] rounded-md border border-l-8 border-[#cfe9b4] border-l-[#94689c] bg-[#dcf5bb] pl-[22px] pr-8 pt-3 pb-3 text-[37px] leading-11 text-[#637a58]">
                    <svg class="-ml-[10px] w-[218px] h-[50px]" viewBox="186 85 218 50" aria-hidden="true"><path d="M189 107L191 101L205 99L248 98L291 93L350 90L360 88L367 90L390 95L399 101L398 107L391 111L388 119L371 124L279 128L230 131L210 128L207 121L191 117Z" fill="#03a9f4" stroke="#03a9f4" stroke-width="5" stroke-linejoin="round"/></svg>
                    <p class="mt-[6px]">Hi Ms Foo,<span class="relative inline-block w-[139px] h-[30px]"><svg class="absolute inset-0 w-full h-full overflow-visible" viewBox="375 146 139 30" aria-hidden="true"><path d="M368 147L371 144L422 143L459 138L463 140L463 146L490 147L516 146L517 152L508 158L508 170L499 174L494 178L459 178L397 181L389 180L389 173L384 167L384 160L382 152L369 150Z" fill="#03a9f4" stroke="#03a9f4" stroke-width="5" stroke-linejoin="round"/></svg></span>got B and the rest of us got A</p>
                </blockquote>
                <p class="[grid-area:2/1] pt-3 pb-[15px] pl-[22px] pr-8">Wow!! 3 of you got A!! Congrats and I'm so happy for you all! Well done!! <svg class="inline-block w-[60px] h-[60px] mr-[5px] my-[6px] align-[-21px]" role="img" aria-label="😁"><use href="#grin"/></svg><svg class="inline-block w-[60px] h-[60px] mr-[5px] my-[6px] align-[-21px]" role="img" aria-label="🤓"><use href="#nerd"/></svg><svg class="inline-block w-[60px] h-[60px] mr-[5px] my-[6px] align-[-21px]" role="img" aria-label="👍"><use href="#thumb"/></svg><svg class="inline-block w-[60px] h-[60px] mr-[5px] my-[6px] align-[-21px]" role="img" aria-label="☘"><use href="#clover"/></svg></p>
                <div class="[grid-area:2/1] self-end justify-self-end flex items-center gap-[11px] pr-[18px] pb-3 text-[32px] leading-8 text-black/40">
                    <time>15:54</time>
                    <svg class="w-11 h-[26px]" role="img" aria-label="Read"><use href="#ticks"/></svg>
                </div>
            </div>

            <div class="relative flex items-end gap-[38px] mt-[23px] rounded-2xl rounded-tl-none bg-white pt-[13px] pb-[17px] pl-[22px] pr-[17px] text-[#212121] shadow-[0_2px_2px_rgba(0,0,0,0.15)]">
                <svg class="absolute -left-5 top-0 w-[21px] h-8 -scale-x-100 text-white"><use href="#tail"/></svg>
                <p>Yeah haha</p>
                <time class="text-[32px] leading-8 -mb-[3px] text-black/40">15:55</time>
            </div>

            <div class="flex items-end gap-[38px] mt-[7px] rounded-2xl bg-white pt-[13px] pb-[17px] pl-[22px] pr-[17px] text-[#212121] shadow-[0_2px_2px_rgba(0,0,0,0.15)]">
                <p>Thank you!</p>
                <time class="text-[32px] leading-8 -mb-[3px] text-black/40">15:55</time>
            </div>

            <div class="relative grid self-stretch ml-[108px] mt-[23px] rounded-2xl rounded-tr-none bg-[#dcfec6] shadow-[0_2px_2px_rgba(0,0,0,0.15)]">
                <svg class="absolute -right-5 top-0 w-[21px] h-8 text-[#dcfec6]"><use href="#tail"/></svg>
                <p class="[grid-area:1/1] pt-3 pb-[15px] pl-[22px] pr-8"><span class="relative inline-block w-[150px] h-[30px]"><svg class="absolute inset-0 w-full h-full overflow-visible" viewBox="177 229 150 30" aria-hidden="true"><path d="M181 229V240" stroke="#1c2414" stroke-width="3"/><path d="M175 242L179 237L219 230L223 223L248 226L273 221L283 221L286 228L291 234L292 240L320 239L326 245L321 252L316 257L293 258L289 262L267 260L236 259L183 259L180 254Z" fill="#03a9f4" stroke="#03a9f4" stroke-width="5" stroke-linejoin="round"/></svg></span>isn't too bad too actually coz he jumped from U to B! So well done too though to be honest I was expecting an A grade from him as well. <svg class="inline-block w-[60px] h-[60px] mr-[5px] my-[6px] align-[-21px]" role="img" aria-label="😊"><use href="#smile"/></svg><svg class="inline-block w-[60px] h-[60px] mr-[5px] my-[6px] align-[-21px]" role="img" aria-label="☘"><use href="#clover"/></svg><svg class="inline-block w-[60px] h-[60px] mr-[5px] my-[6px] align-[-21px]" role="img" aria-label="👍"><use href="#thumb"/></svg></p>
                <div class="[grid-area:1/1] self-end justify-self-end flex items-center gap-[11px] pr-[18px] pb-3 text-[32px] leading-8 text-black/40">
                    <time>15:55</time>
                    <svg class="w-11 h-[26px]" role="img" aria-label="Read"><use href="#ticks"/></svg>
                </div>
            </div>
        </div>
    </main>

    <script>
        // Bubbles scattered between the doodles: x, y, radius
        const dots = [
            [80,145,5],[52,143,3],[113,145,3],[7,179,4],[130,186,7],[209,207,5],[138,214,4],[15,262,4],[13,284,4],[13,302,7],
            [12,326,4],[26,352,4],[14,361,6],[33,374,3],[48,368,5],[68,350,4],[80,368,7],[88,383,5],[76,414,4],[147,347,4],
            [103,379,3],[260,223,5],[228,268,7],[267,265,4],[294,280,8],[213,295,5],[175,333,9],[261,325,3],[18,476,5],[37,469,4],
            [25,498,4],[27,519,3],[18,532,4],[114,527,4],[151,444,5],[12,26,6],[34,8,4],[33,34,4],[42,53,4],[117,43,4],
            [116,53,3],[140,50,6],[66,70,4],[107,71,5],[140,80,6],[8,101,7],[113,127,6],[26,128,4],[206,8,5],[594,14,4],
            [640,12,7],[620,21,4],[694,25,4],[794,15,5],[816,14,4],[831,2,7],[854,6,3],[869,10,4],[907,11,5],[814,34,7],
            [832,40,4],[890,32,4],[916,35,4],[940,40,4],[966,38,9],[946,63,6],[953,79,4],[938,87,5],[948,155,3],[967,161,5],
            [824,217,6],[827,234,3],[846,239,3],[870,233,3],[871,251,5],[821,251,3],[888,267,3],[735,239,4],[678,239,5],[682,253,3],
            [741,257,3],[677,294,5],[678,311,3],[699,317,7],[772,286,3],[784,293,4],[782,312,6],[793,324,4],[768,326,3],[935,279,4],
            [957,286,6],[938,298,4],[874,305,3],[926,309,3],[914,325,5],[966,265,4],[661,269,6],[555,313,3],[572,319,4],[934,430,5],
            [958,520,6],[938,548,4],[18,706,3],[5,718,4],[36,712,6],[23,728,4],[35,744,4],[105,704,7],[119,725,3],[131,733,3],
            [142,719,4],[168,718,4],[191,699,3],[198,687,3],[216,693,4],[199,716,5],[251,688,4],[260,649,3],[270,666,7],[308,674,3],
            [327,670,4],[332,687,5],[345,701,4],[376,703,6],[391,697,3],[414,698,3],[420,671,4],[437,658,4],[471,652,7],[516,648,4],
            [501,646,3],[310,767,5],[324,780,4],[339,784,3],[343,804,6],[365,795,3],[382,802,4],[441,804,6],[466,798,3],[480,780,3],
            [498,774,7],[520,770,3],[420,771,5],[429,752,3],[119,807,4],[6,787,6],[14,810,4],[432,630,6],[449,636,5],[558,635,4],
            [563,649,3],[578,597,5],[591,609,3],[655,585,3],[670,575,4],[686,596,6],[672,617,6],[699,622,7],[718,625,4],[682,633,3],
            [728,602,4],[771,597,7],[786,607,4],[800,630,3],[786,645,3],[797,665,4],[864,646,4],[857,587,7],[842,577,4],[832,586,4],
            [957,585,4],[965,569,4],[948,644,8],[915,661,5],[932,667,4],[959,663,4],[952,686,5],[961,716,4],[949,737,7],[743,702,6],
            [568,691,4],[562,712,6],[687,710,5],[845,721,4],[855,741,4],[837,736,4],[811,740,5],[837,758,7],[870,753,4],[835,958,3],
            [905,936,6],[846,971,4],[826,960,3],[842,935,4],[10,876,4],[74,889,4],[82,902,4],[97,905,4],[115,907,5],[73,917,5],
            [127,927,4],[53,979,5],[62,1007,4],[87,1012,5],[65,1031,6],[96,1049,5],[930,895,4],[938,912,4],[920,1060,5],[890,1030,4]
        ];

        const layer = document.getElementById('dots');
        dots.forEach(([x, y, r]) => {
            const dot = document.createElementNS('http://www.w3.org/2000/svg', 'circle');
            dot.setAttribute('cx', x);
            dot.setAttribute('cy', y);
            dot.setAttribute('r', r);
            layer.appendChild(dot);
        });
    </script>
</body>
</html>
